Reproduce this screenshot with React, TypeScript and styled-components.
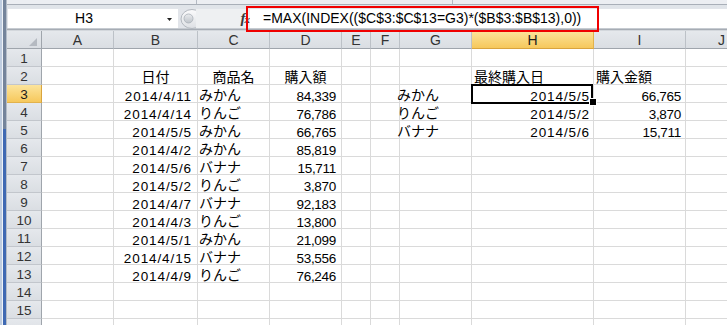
import styled, { createGlobalStyle, css } from 'styled-components';

const GlobalStyle = createGlobalStyle`
  html, body {
    margin: 0;
    padding: 0;
    background: #ffffff;
  }
  body {
    font-family: 'Liberation Sans', 'Noto Sans CJK JP', sans-serif;
  }
`;

type Align = 'left' | 'right' | 'center';
type Kind = 'date' | 'num' | 'text';

interface CellData {
  text: string;
  align: Align;
  kind: Kind;
  inset?: number;
}

const COLUMNS = [
  { name: 'A', width: 72 },
  { name: 'B', width: 84 },
  { name: 'C', width: 72 },
  { name: 'D', width: 72 },
  { name: 'E', width: 29 },
  { name: 'F', width: 29 },
  { name: 'G', width: 72 },
  { name: 'H', width: 122 },
  { name: 'I', width: 92 },
  { name: 'J', width: 72 },
];
// row 16 only shows its top edge, its label falls below the window
const ROW_COUNT = 16;
const LABELLED_ROWS = 15;
const ACTIVE_COL = 'H';
const ACTIVE_ROW = 3;

const purchases = [
  ['2014/4/11', 'みかん', '84,339'],
  ['2014/4/14', 'りんご', '76,786'],
  ['2014/5/5', 'みかん', '66,765'],
  ['2014/4/2', 'みかん', '85,819'],
  ['2014/5/6', 'バナナ', '15,711'],
  ['2014/5/2', 'りんご', '3,870'],
  ['2014/4/7', 'バナナ', '92,183'],
  ['2014/4/3', 'りんご', '13,800'],
  ['2014/5/1', 'みかん', '21,099'],
  ['2014/4/15', 'バナナ', '53,556'],
  ['2014/4/9', 'りんご', '76,246'],
];

const summary = [
  ['みかん', '2014/5/5', '66,765'],
  ['りんご', '2014/5/2', '3,870'],
  ['バナナ', '2014/5/6', '15,711'],
];

const cells: Record<string, CellData> = {
  B2: { text: '日付', align: 'center', kind: 'text' },
  C2: { text: '商品名', align: 'center', kind: 'text' },
  D2: { text: '購入額', align: 'center', kind: 'text' },
  H2: { text: '最終購入日', align: 'left', kind: 'text', inset: 2 },
  I2: { text: '購入金額', align: 'left', kind: 'text', inset: 2 },
};
purchases.forEach(([date, item, amount], i) => {
  const r = i + 3;
  cells[`B${r}`] = { text: date, align: 'right', kind: 'date', inset: 5 };
  cells[`C${r}`] = { text: item, align: 'left', kind: 'text', inset: 1 };
  cells[`D${r}`] = { text: amount, align: 'right', kind: 'num', inset: 5 };
});
summary.forEach(([item, date, amount], i) => {
  const r = i + 3;
  cells[`G${r}`] = { text: item, align: 'left', kind: 'text', inset: -3 };
  cells[`H${r}`] = { text: date, align: 'right', kind: 'date', inset: 3 };
  cells[`I${r}`] = { text: amount, align: 'right', kind: 'num', inset: 4 };
});

const FORMULA = '=MAX(INDEX(($C$3:$C$13=G3)*($B$3:$B$13),0))';

const Frame = styled.div`
  display: flex;
  width: 727px;
  height: 325px;
  overflow: hidden;
`;

const EdgeStrip = styled.div`
  width: 7px;
  flex: none;
  display: flex;
  flex-direction: column;
`;

const EdgePart = styled.div<{ $blue?: boolean }>`
  flex: ${(p) => (p.$blue ? '1' : 'none')};
  height: ${(p) => (p.$blue ? 'auto' : '129px')};
  background: linear-gradient(
    to right,
    #bfcde0 0 2px,
    #eef2f7 2px 3px,
    ${(p) => (p.$blue ? '#3f69b3' : '#74849b')} 3px 6px,
    #b3bcc8 6px 7px
  );
`;

const Workspace = styled.div`
  position: relative;
  flex: 1;
  min-width: 0;
  overflow: hidden;
`;

const RibbonEdge = styled.div`
  display: flex;
  align-items: flex-start;
  height: 8px;
  background: linear-gradient(
    to bottom,
    #eceef2 0 4px,
    #a9afb8 4px 5px,
    #e0e4e9 5px 8px
  );
`;

const RibbonGroup = styled.div<{ $w: number }>`
  box-sizing: border-box;
  width: ${(p) => p.$w}px;
  height: 4px;
  border-right: 1px solid #b4bac3;
`;

const FormulaBar = styled.div`
  box-sizing: border-box;
  display: flex;
  height: 20px;
  padding-top: 1px;
  background: #e2e5ea;
`;

const NameBox = styled.div`
  display: flex;
  align-items: center;
  width: 170px;
  margin-left: 1px;
  background: #ffffff;
`;

const NameText = styled.span`
  flex: 1;
  text-align: center;
  font-size: 14px;
  line-height: 19px;
  color: #000;
`;

const DropArrow = styled.svg`
  margin: 1px 6px 0 7px;
`;

const Splitter = styled.div`
  display: flex;
  align-items: center;
  width: 18px;
  padding-left: 2px;
  box-sizing: border-box;
`;

const FxSlot = styled.div`
  display: flex;
  justify-content: flex-end;
  width: 54px;
  background: #eef0f2;
`;

const Fx = styled.span`
  font-family: 'Liberation Serif', serif;
  font-style: italic;
  font-weight: bold;
  font-size: 15px;
  line-height: 19px;
  color: #3a3a3a;
  small {
    font-size: 11px;
    margin-left: -1px;
  }
`;

const FormulaInput = styled.div`
  flex: 1;
  background: #ffffff;
  padding-left: 13px;
  font-size: 14px;
  line-height: 19px;
  color: #000;
  white-space: nowrap;
`;

const BarShadow = styled.div`
  height: 3px;
  background: linear-gradient(
    to bottom,
    #c6cbd1 0 1px,
    #a6acb4 1px 2px,
    #d3d7dc 2px 3px
  );
`;

const RedFrame = styled.div`
  position: absolute;
  top: 6px;
  left: 239px;
  width: 353px;
  height: 26px;
  box-sizing: border-box;
  border: 2px solid #f00000;
  z-index: 3;
  pointer-events: none;
`;

const Sheet = styled.div`
  display: grid;
  grid-template-columns: 35px ${COLUMNS.map((c) => `${c.width}px`).join(' ')};
  grid-auto-rows: 18px;
  color: #000;
`;

const headFill = css<{ $active?: boolean }>`
  background: ${(p) =>
    p.$active
      ? 'linear-gradient(to bottom, #fce49c, #f6c85c)'
      : 'linear-gradient(to bottom, #e5e8ec, #dadee3)'};
  color: ${(p) => (p.$active ? '#1a1a1a' : '#333333')};
`;

const Corner = styled.div`
  box-sizing: border-box;
  display: flex;
  justify-content: flex-end;
  align-items: flex-end;
  padding: 0 4px 2px 0;
  background: linear-gradient(to bottom, #e5e8ec, #dadee3);
  border-right: 1px solid #9fa5ac;
  border-bottom: 1px solid #9fa5ac;
`;

const ColHead = styled.div<{ $active?: boolean }>`
  box-sizing: border-box;
  ${headFill}
  border-right: 1px solid ${(p) => (p.$active ? '#e2b24c' : '#bcc1c7')};
  border-bottom: 1px solid ${(p) => (p.$active ? '#d9a43e' : '#9fa5ac')};
  padding-top: 2px;
  text-align: center;
  font-size: 14px;
  line-height: 15px;
`;

const RowHead = styled.div<{ $active?: boolean }>`
  box-sizing: border-box;
  ${headFill}
  border-right: 1px solid ${(p) => (p.$active ? '#d9a43e' : '#9fa5ac')};
  border-bottom: 1px solid ${(p) => (p.$active ? '#e2b24c' : '#c2c6cc')};
  padding-top: 3px;
  text-align: center;
  font-size: 13.5px;
  line-height: 14px;
`;

const kindStyles: Record<Kind, ReturnType<typeof css>> = {
  date: css`
    font-size: 13.5px;
    letter-spacing: 0.9px;
    padding-top: 3px;
  `,
  num: css`
    font-size: 13.5px;
    letter-spacing: -0.3px;
    padding-top: 3px;
  `,
  text: css`
    font-size: 14px;
    padding-top: 2px;
  `,
};

const Cell = styled.div<{ $align: Align; $kind: Kind; $inset: number }>`
  position: relative;
  box-sizing: border-box;
  height: 18px;
  border-right: 1px solid #dadada;
  border-bottom: 1px solid #dadada;
  font-family: 'Liberation Sans', 'Noto Sans CJK JP', sans-serif;
  white-space: nowrap;
  line-height: 17px;
  text-align: ${(p) => p.$align};
  ${(p) =>
    p.$align === 'right'
      ? `padding-right: ${p.$inset}px;`
      : `text-indent: ${p.$inset}px;`}
  ${(p) => kindStyles[p.$kind]}
`;

const Selection = styled.div`
  position: absolute;
  top: -1px;
  left: -1px;
  right: 0;
  bottom: -2px;
  border: 2px solid #000;
  z-index: 2;
  pointer-events: none;
`;

const FillHandle = styled.div`
  position: absolute;
  right: -3px;
  bottom: -3px;
  width: 6px;
  height: 6px;
  background: #000;
  box-shadow: 0 0 0 1px #ffffff;
  z-index: 2;
`;

const SplitKnob = () => (
  <svg width="16" height="20" viewBox="0 0 16 20">
    <defs>
      <linearGradient id="knobOuter" x1="0" y1="0" x2="0" y2="1">
        <stop offset="0" stopColor="#fbfbfc" />
        <stop offset="1" stopColor="#dde0e4" />
      </linearGradient>
      <linearGradient id="knobInner" x1="0" y1="0" x2="0" y2="1">
        <stop offset="0" stopColor="#e9ebee" />
        <stop offset="1" stopColor="#bfc4ca" />
      </linearGradient>
    </defs>
    <ellipse cx="12" cy="10" rx="11" ry="9.5" fill="url(#knobOuter)" stroke="#b3b8bf" />
    <circle cx="8.5" cy="9.5" r="4.5" fill="url(#knobInner)" stroke="#aab0b7" strokeWidth="0.8" />
  </svg>
);

const App = () => {
  const rows = Array.from({ length: ROW_COUNT }, (_, i) => i + 1);
  return (
    <>
      <GlobalStyle />
      <Frame>
        <EdgeStrip>
          <EdgePart />
          <EdgePart $blue />
        </EdgeStrip>
        <Workspace>
          <RibbonEdge>
            <RibbonGroup $w={190} />
            <RibbonGroup $w={256} />
          </RibbonEdge>
          <FormulaBar>
            <NameBox>
              <NameText>H3</NameText>
              <DropArrow width="5" height="3" viewBox="0 0 5 3">
                <path d="M0 0h5L2.5 3z" fill="#222" />
              </DropArrow>
            </NameBox>
            <Splitter>
              <SplitKnob />
            </Splitter>
            <FxSlot>
              <Fx>
                f<small>x</small>
              </Fx>
            </FxSlot>
            <FormulaInput>{FORMULA}</FormulaInput>
          </FormulaBar>
          <BarShadow />
          <Sheet>
            <Corner>
              <svg width="8" height="8" viewBox="0 0 8 8">
                <path d="M8 0v8H0z" fill="#b5bac1" />
              </svg>
            </Corner>
            {COLUMNS.map((c) => (
              <ColHead key={c.name} $active={c.name === ACTIVE_COL}>
                {c.name}
              </ColHead>
            ))}
            {rows.map((r) => [
              <RowHead key={`h${r}`} $active={r === ACTIVE_ROW}>
                {r <= LABELLED_ROWS ? r : null}
              </RowHead>,
              ...COLUMNS.map((c) => {
                const id = `${c.name}${r}`;
                const data = cells[id];
                const isActive = c.name === ACTIVE_COL && r === ACTIVE_ROW;
                return (
                  <Cell
                    key={id}
                    $align={data?.align ?? 'left'}
                    $kind={data?.kind ?? 'text'}
                    $inset={data?.inset ?? 0}
                  >
                    {data?.text}
                    {isActive && (
                      <>
                        <Selection />
                        <FillHandle />
                      </>
                    )}
                  </Cell>
                );
              }),
            ])}
          </Sheet>
          <RedFrame />
        </Workspace>
      </Frame>
    </>
  );
};

export default App;
